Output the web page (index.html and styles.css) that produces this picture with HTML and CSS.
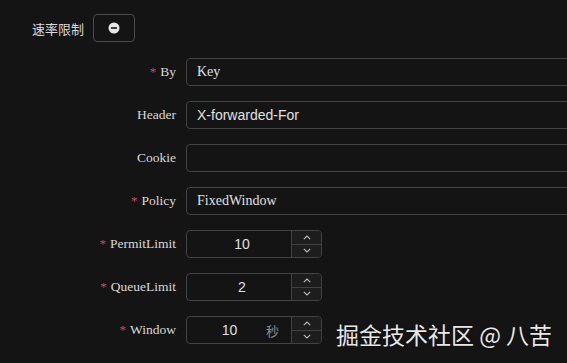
FILE: index.html
```
<!DOCTYPE html>
<html lang="zh">
<head>
<meta charset="utf-8">
<link rel="stylesheet" href="styles.css">
</head>
<body>
<div class="page">
  <div class="head">
    <span class="head-label">速率限制</span>
    <button class="icon-btn" type="button">
      <svg width="12" height="12" viewBox="0 0 12 12"><circle cx="6" cy="6" r="5.5" fill="#e6e6e6"/><rect x="3" y="5.2" width="6" height="1.6" fill="#141414"/></svg>
    </button>
  </div>
  <div class="form">
    <div class="row"><label class="lbl req">By</label><div class="inp serif">Key</div></div>
    <div class="row"><label class="lbl">Header</label><div class="inp sans">X-forwarded-For</div></div>
    <div class="row"><label class="lbl">Cookie</label><div class="inp"></div></div>
    <div class="row"><label class="lbl req">Policy</label><div class="inp serif">FixedWindow</div></div>
    <div class="row"><label class="lbl req">PermitLimit</label>
      <div class="num"><span class="num-val">10</span>
        <span class="spin"><span class="spin-btn"><svg width="8" height="5" viewBox="0 0 8 5"><path d="M0.8 4.2 L4 1 L7.2 4.2" fill="none" stroke="#bdbdbd" stroke-width="1.1"/></svg></span><span class="spin-btn"><svg width="8" height="5" viewBox="0 0 8 5"><path d="M0.8 0.8 L4 4 L7.2 0.8" fill="none" stroke="#bdbdbd" stroke-width="1.1"/></svg></span></span>
      </div>
    </div>
    <div class="row"><label class="lbl req">QueueLimit</label>
      <div class="num"><span class="num-val">2</span>
        <span class="spin"><span class="spin-btn"><svg width="8" height="5" viewBox="0 0 8 5"><path d="M0.8 4.2 L4 1 L7.2 4.2" fill="none" stroke="#bdbdbd" stroke-width="1.1"/></svg></span><span class="spin-btn"><svg width="8" height="5" viewBox="0 0 8 5"><path d="M0.8 0.8 L4 4 L7.2 0.8" fill="none" stroke="#bdbdbd" stroke-width="1.1"/></svg></span></span>
      </div>
    </div>
    <div class="row"><label class="lbl req">Window</label>
      <div class="num"><span class="num-val">10</span><span class="suffix">秒</span>
        <span class="spin"><span class="spin-btn"><svg width="8" height="5" viewBox="0 0 8 5"><path d="M0.8 4.2 L4 1 L7.2 4.2" fill="none" stroke="#bdbdbd" stroke-width="1.1"/></svg></span><span class="spin-btn"><svg width="8" height="5" viewBox="0 0 8 5"><path d="M0.8 0.8 L4 4 L7.2 0.8" fill="none" stroke="#bdbdbd" stroke-width="1.1"/></svg></span></span>
      </div>
    </div>
  </div>
  <div class="watermark">掘金技术社区 @ 八苦</div>
</div>
</body>
</html>
```
FILE: styles.css
```
html, body {
  margin: 0;
  padding: 0;
  background: #141414;
  width: 567px;
  height: 363px;
  overflow: hidden;
}
.page {
  position: relative;
  width: 567px;
  height: 363px;
  overflow: hidden;
  color: #d9d9d9;
  font-family: "Liberation Serif", "Noto Sans CJK SC", serif;
}
.head {
  display: flex;
  align-items: center;
  gap: 10px;
  padding: 14px 0 0 32px;
  height: 28px;
}
.head-label {
  font-family: "Noto Sans CJK SC", "Noto Sans", sans-serif;
  font-size: 13px;
  color: #d9d9d9;
}
.icon-btn {
  width: 42px;
  height: 28px;
  box-sizing: border-box;
  border: 1px solid #4a4a4a;
  border-radius: 4px;
  background: #141414;
  display: flex;
  align-items: center;
  justify-content: center;
  padding: 0;
  margin-left: -1px;
}
.icon-btn svg { display: block; }
.form {
  display: flex;
  flex-direction: column;
  gap: 15px;
  margin-top: 16px;
}
.row {
  display: flex;
  align-items: center;
  gap: 10px;
  height: 28px;
}
.lbl {
  width: 176px;
  text-align: right;
  font-size: 13.5px;
  color: #d9d9d9;
  flex: none;
}
.lbl.req::before {
  content: "*";
  color: #c94a6c;
  margin-right: 4px;
  font-size: 13px;
}
.inp {
  width: 500px;
  height: 28px;
  box-sizing: border-box;
  border: 1px solid #424242;
  border-radius: 4px;
  padding: 0 11px 0 10px;
  display: flex;
  align-items: center;
  font-size: 14px;
  color: #e0e0e0;
  flex: none;
}
.inp.serif { font-family: "Liberation Serif", serif; }
.inp.sans { font-family: "Liberation Sans", Arial, sans-serif; }
.num {
  width: 136px;
  height: 28px;
  box-sizing: border-box;
  border: 1px solid #424242;
  border-radius: 4px;
  display: flex;
  align-items: stretch;
  flex: none;
  font-family: "Liberation Sans", Arial, sans-serif;
  font-size: 14px;
  color: #e0e0e0;
  overflow: hidden;
}
.num-val {
  flex: 1;
  display: flex;
  align-items: center;
  justify-content: center;
  padding-left: 6px;
}
.suffix {
  display: flex;
  align-items: center;
  padding-right: 12px;
  color: #8c8c8c;
  font-family: "Noto Sans CJK SC", sans-serif;
  font-size: 13px;
}
.spin {
  width: 29px;
  flex: none;
  display: flex;
  flex-direction: column;
  border-left: 1px solid #424242;
  background: #1d1d1d;
}
.spin-btn {
  flex: 1;
  display: flex;
  align-items: center;
  justify-content: center;
}
.spin-btn + .spin-btn { border-top: 1px solid #424242; }
.spin-btn svg { display: block; }
.watermark {
  position: absolute;
  left: 336px;
  top: 319px;
  font-family: "Noto Sans CJK SC", "Noto Sans", sans-serif;
  font-size: 23px;
  line-height: 30px;
  color: #e8e8e8;
  white-space: nowrap;
  text-shadow: 0 0 2px rgba(0,0,0,0.6);
}
```
